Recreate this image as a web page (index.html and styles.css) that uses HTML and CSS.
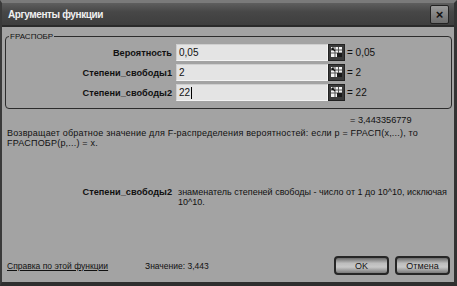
FILE: index.html
```html
<!DOCTYPE html>
<html lang="ru">
<head>
    <meta charset="UTF-8" />
    <title>Аргументы функции</title>
    <link rel="stylesheet" href="styles.css">
</head>
<body>
    <div class="dialog">
        <!-- Title bar -->
        <div class="titlebar">
            <span class="title">Аргументы функции</span>
            <span class="close-btn">&#215;</span>
        </div>

        <div class="dialog-body">
            <fieldset class="args">
                <legend>FРАСПОБР</legend>

                <div class="arg-row">
                    <span class="arg-label">Вероятность</span>
                    <span class="arg-input">0,05</span>
                    <span class="ref-btn">
                        <svg width="17" height="17" viewBox="0 0 17 17">
                            <rect x="0.5" y="0.5" width="16" height="16" fill="#3a3a3a" stroke="#222"/>
                            <rect x="3" y="3" width="11" height="10" fill="#f2f2f2"/>
                            <path d="M3 6h11M3 9h11M7 3v10M10.5 3v10" stroke="#555" stroke-width="1"/>
                            <rect x="9" y="9" width="5" height="4" fill="#1a1a1a"/>
                            <path d="M4 4l3 3M4 4h2M4 4v2" stroke="#111" stroke-width="1.2" fill="none"/>
                        </svg>
                    </span>
                    <span class="arg-value">= 0,05</span>
                </div>

                <div class="arg-row">
                    <span class="arg-label">Степени_свободы1</span>
                    <span class="arg-input">2</span>
                    <span class="ref-btn">
                        <svg width="17" height="17" viewBox="0 0 17 17">
                            <rect x="0.5" y="0.5" width="16" height="16" fill="#3a3a3a" stroke="#222"/>
                            <rect x="3" y="3" width="11" height="10" fill="#f2f2f2"/>
                            <path d="M3 6h11M3 9h11M7 3v10M10.5 3v10" stroke="#555" stroke-width="1"/>
                            <rect x="9" y="9" width="5" height="4" fill="#1a1a1a"/>
                            <path d="M4 4l3 3M4 4h2M4 4v2" stroke="#111" stroke-width="1.2" fill="none"/>
                        </svg>
                    </span>
                    <span class="arg-value">= 2</span>
                </div>

                <div class="arg-row">
                    <span class="arg-label">Степени_свободы2</span>
                    <span class="arg-input">22<span class="caret"></span></span>
                    <span class="ref-btn">
                        <svg width="17" height="17" viewBox="0 0 17 17">
                            <rect x="0.5" y="0.5" width="16" height="16" fill="#3a3a3a" stroke="#222"/>
                            <rect x="3" y="3" width="11" height="10" fill="#f2f2f2"/>
                            <path d="M3 6h11M3 9h11M7 3v10M10.5 3v10" stroke="#555" stroke-width="1"/>
                            <rect x="9" y="9" width="5" height="4" fill="#1a1a1a"/>
                            <path d="M4 4l3 3M4 4h2M4 4v2" stroke="#111" stroke-width="1.2" fill="none"/>
                        </svg>
                    </span>
                    <span class="arg-value">= 22</span>
                </div>
            </fieldset>

            <div class="result">= 3,443356779</div>

            <p class="desc">Возвращает обратное значение для F-распределения вероятностей: если p = FРАСП(x,...), то FРАСПОБР(p,...) = x.</p>

            <div class="param">
                <span class="param-name">Степени_свободы2</span>
                <span class="param-text">знаменатель степеней свободы - число от 1 до 10^10, исключая 10^10.</span>
            </div>

            <div class="footer">
                <a class="help-link" href="#">Справка по этой функции</a>
                <span class="total">Значение:&nbsp;3,443</span>
                <div class="buttons">
                    <button class="btn">OK</button>
                    <button class="btn">Отмена</button>
                </div>
            </div>
        </div>
    </div>
</body>
</html>
```

FILE: styles.css
```css
* {
    margin: 0;
    padding: 0;
    box-sizing: border-box;
}

body {
    font-family: 'Liberation Sans', Arial, sans-serif;
    background: #8a8a8a;
    color: #111;
    width: 457px;
    height: 286px;
    overflow: hidden;
}

.dialog {
    width: 457px;
    height: 286px;
    display: flex;
    flex-direction: column;
    background: #a3a3a3;
    border: 3px solid #3c3c3c;
    border-top: 3px solid #7a7a7a;
    border-bottom: 4px solid #2e2e2e;
    border-left: 2px solid #3a3a3a;
    border-right: 3px solid #333;
}

.titlebar {
    height: 24px;
    display: flex;
    align-items: center;
    justify-content: space-between;
    padding: 0 5px 0 6px;
    background: linear-gradient(#5e5e5e, #474747 40%, #3e3e3e);
    border-bottom: 2px solid #2a2a2a;
}

.title {
    color: #f0f0f0;
    font-weight: bold;
    font-size: 10px;
    letter-spacing: -0.4px;
}

.close-btn {
    width: 19px;
    height: 19px;
    display: flex;
    align-items: center;
    justify-content: center;
    background: linear-gradient(#9a9a9a, #6c6c6c);
    border: 1px solid #222;
    border-radius: 2px;
    color: #111;
    font-size: 13px;
    font-weight: bold;
    line-height: 1;
}

.dialog-body {
    flex: 1;
    display: flex;
    flex-direction: column;
    padding: 5px 2px 7px 3px;
}

.args {
    border: 1px solid #2c2c2c;
    border-radius: 4px;
    padding: 3px 0 5px 0;
    height: 77px;
}

.args legend {
    font-size: 8px;
    margin-left: 3px;
    padding: 0 1px;
    color: #111;
    line-height: 9px;
}

.arg-row {
    display: flex;
    align-items: center;
    height: 17px;
    margin-bottom: 3px;
}

.arg-label {
    width: 170px;
    text-align: right;
    font-weight: bold;
    font-size: 9.2px;
    padding-right: 4px;
}

.arg-input {
    width: 152px;
    height: 17px;
    background: #e4e4e4;
    border: 1px solid #cfcfcf;
    border-right-color: #f4f4f4;
    border-bottom-color: #f4f4f4;
    font-size: 10px;
    line-height: 15px;
    padding-left: 2px;
    display: flex;
    align-items: center;
}

.caret {
    display: inline-block;
    width: 1px;
    height: 12px;
    background: #000;
    margin-left: 1px;
}

.ref-btn {
    width: 17px;
    height: 17px;
    display: flex;
}

.arg-value {
    font-size: 10px;
    padding-left: 2px;
}

.result {
    font-size: 9.2px;
    padding-left: 345px;
    margin-top: 5px;
    height: 12px;
    line-height: 12px;
}

.desc {
    font-size: 9px;
    letter-spacing: 0.2px;
    line-height: 10px;
    margin-top: 2px;
    padding: 0 20px 0 2px;
    height: 59px;
}

.param {
    display: flex;
    line-height: 10px;
}

.param-name {
    width: 171px;
    flex-shrink: 0;
    text-align: right;
    font-weight: bold;
    font-size: 9.2px;
    padding-right: 4px;
}

.param-text {
    font-size: 9px;
    margin-left: 2px;
}

.footer {
    display: flex;
    align-items: center;
    height: 19px;
    margin-top: auto;
    font-size: 8.5px;
}

.help-link {
    color: #111;
    text-decoration: underline;
    padding-left: 2px;
    width: 140px;
}

.total {
    flex: 1;
}

.buttons {
    display: flex;
    gap: 6px;
    padding-right: 2px;
}

.btn {
    width: 55px;
    height: 19px;
    font-family: 'Liberation Sans', Arial, sans-serif;
    font-size: 9px;
    color: #111;
    border: 2px solid #262626;
    border-radius: 4px;
    background: linear-gradient(#6a6a6a, #bdbdbd 35%, #c8c8c8 60%, #7a7a7a);
}
```
